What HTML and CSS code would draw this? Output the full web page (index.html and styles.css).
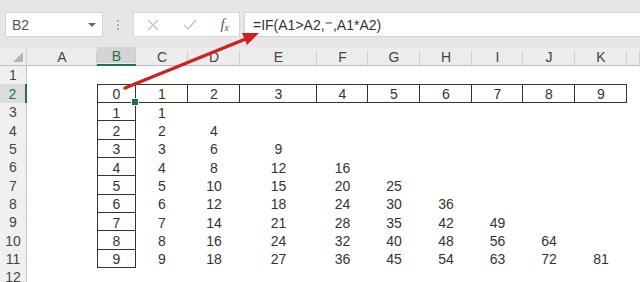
FILE: index.html
```html
<!DOCTYPE html>
<html>
<head>
<meta charset="utf-8">
<link rel="stylesheet" href="styles.css">
</head>
<body>
<div class="app">
  <div class="toolbar">
    <div class="namebox"><span class="nb-text">B2</span><span class="nb-caret"></span></div>
    <div class="grip"><span></span><span></span><span></span></div>
    <div class="fxbtns">
      <svg class="ic" width="14" height="14" viewBox="0 0 14 14"><path d="M2 2L12 12M12 2L2 12" stroke="#c4c4c4" stroke-width="1.4" fill="none"/></svg>
      <svg class="ic" width="16" height="14" viewBox="0 0 16 14"><path d="M2 7L6 11L14 2" stroke="#c4c4c4" stroke-width="1.4" fill="none"/></svg>
      <span class="fx">f<sub>x</sub></span>
    </div>
    <div class="formula">=IF(A1&gt;A2,<span class="q">""</span>,A1*A2)</div>
  </div>
  <div class="sheet">
    <div class="row hdr">
      <div class="corner"><span class="tri"></span></div>
      <div class="ch">A</div><div class="ch sel">B</div><div class="ch">C</div><div class="ch">D</div><div class="ch">E</div><div class="ch">F</div><div class="ch">G</div><div class="ch">H</div><div class="ch">I</div><div class="ch">J</div><div class="ch">K</div><div class="ch"></div>
    </div>
    <div class="row r1">
      <div class="rh">1</div><div></div><div></div><div></div><div></div><div></div><div></div><div></div><div></div><div></div><div></div><div></div><div></div>
    </div>
    <div class="row r2">
      <div class="rh sel">2</div><div></div><div class="c b top first active">0</div><div class="c b top">1</div><div class="c b top">2</div><div class="c b top">3</div><div class="c b top">4</div><div class="c b top">5</div><div class="c b top">6</div><div class="c b top">7</div><div class="c b top">8</div><div class="c b top">9</div><div></div>
    </div>
    <div class="row">
      <div class="rh">3</div><div></div><div class="c b first">1</div><div class="c">1</div><div></div><div></div><div></div><div></div><div></div><div></div><div></div><div></div><div></div>
    </div>
    <div class="row">
      <div class="rh">4</div><div></div><div class="c b first">2</div><div class="c">2</div><div class="c">4</div><div></div><div></div><div></div><div></div><div></div><div></div><div></div><div></div>
    </div>
    <div class="row">
      <div class="rh">5</div><div></div><div class="c b first">3</div><div class="c">3</div><div class="c">6</div><div class="c">9</div><div></div><div></div><div></div><div></div><div></div><div></div><div></div>
    </div>
    <div class="row">
      <div class="rh">6</div><div></div><div class="c b first">4</div><div class="c">4</div><div class="c">8</div><div class="c">12</div><div class="c">16</div><div></div><div></div><div></div><div></div><div></div><div></div>
    </div>
    <div class="row">
      <div class="rh">7</div><div></div><div class="c b first">5</div><div class="c">5</div><div class="c">10</div><div class="c">15</div><div class="c">20</div><div class="c">25</div><div></div><div></div><div></div><div></div><div></div>
    </div>
    <div class="row">
      <div class="rh">8</div><div></div><div class="c b first">6</div><div class="c">6</div><div class="c">12</div><div class="c">18</div><div class="c">24</div><div class="c">30</div><div class="c">36</div><div></div><div></div><div></div><div></div>
    </div>
    <div class="row">
      <div class="rh">9</div><div></div><div class="c b first">7</div><div class="c">7</div><div class="c">14</div><div class="c">21</div><div class="c">28</div><div class="c">35</div><div class="c">42</div><div class="c">49</div><div></div><div></div><div></div>
    </div>
    <div class="row">
      <div class="rh">10</div><div></div><div class="c b first">8</div><div class="c">8</div><div class="c">16</div><div class="c">24</div><div class="c">32</div><div class="c">40</div><div class="c">48</div><div class="c">56</div><div class="c">64</div><div></div><div></div>
    </div>
    <div class="row">
      <div class="rh">11</div><div></div><div class="c b first">9</div><div class="c">9</div><div class="c">18</div><div class="c">27</div><div class="c">36</div><div class="c">45</div><div class="c">54</div><div class="c">63</div><div class="c">72</div><div class="c">81</div><div></div>
    </div>
    <div class="row">
      <div class="rh">12</div><div></div><div></div><div></div><div></div><div></div><div></div><div></div><div></div><div></div><div></div><div></div><div></div>
    </div>
  </div>
  <svg class="arrow" width="640" height="282" viewBox="0 0 640 282">
    <line x1="125" y1="88" x2="248" y2="38" stroke="#d0201e" stroke-width="3.5" stroke-linecap="round"/>
    <polygon points="259,33 242,33 247,45" fill="#d0201e"/>
  </svg>
</div>
</body>
</html>
```
FILE: styles.css
```css
* { box-sizing: border-box; }
html, body { margin: 0; padding: 0; }
body {
  width: 640px;
  height: 282px;
  overflow: hidden;
  background: #fff;
  font-family: "Liberation Sans", Arial, sans-serif;
  color: #333;
}
.app { position: relative; width: 640px; height: 282px; overflow: hidden; }

.toolbar {
  height: 47px;
  background: #e6e6e6;
  display: flex;
  align-items: flex-start;
  padding: 12px 0 0 5px;
}
.namebox {
  width: 98px;
  height: 25px;
  background: #fff;
  border: 1px solid #d4d4d4;
  display: flex;
  align-items: center;
  justify-content: space-between;
  padding: 0 6px 0 6px;
  font-size: 14px;
  color: #555;
}
.nb-caret {
  width: 0; height: 0;
  border-left: 4px solid transparent;
  border-right: 4px solid transparent;
  border-top: 4px solid #666;
}
.grip {
  width: 30px;
  height: 25px;
  display: flex;
  flex-direction: column;
  align-items: center;
  justify-content: center;
  gap: 2px;
}
.grip span { width: 2px; height: 2px; background: #b0b0b0; }
.fxbtns {
  width: 107px;
  height: 25px;
  background: #fff;
  border: 1px solid #d8d8d8;
  display: flex;
  align-items: center;
  justify-content: space-between;
  padding: 0 10px 0 12px;
}
.fx {
  font-family: "Liberation Serif", serif;
  font-style: italic;
  font-size: 15px;
  color: #555;
  line-height: 1;
}
.fx sub { font-size: 10px; vertical-align: -2px; }
.formula {
  flex: 1;
  height: 25px;
  margin-left: 4px;
  background: #fff;
  border: 1px solid #d4d4d4;
  border-right: none;
  display: flex;
  align-items: center;
  padding-left: 8px;
  font-size: 14px;
  color: #333;
}
.formula .q { font-size: 9px; vertical-align: 5px; padding: 0 1px; }

.sheet { display: flex; flex-direction: column; }
.row {
  display: grid;
  grid-template-columns: 27px 70px 39px 52px 52px 77px 51px 52px 52px 51px 52px 52px 13px;
  height: 18.35px;
}
.row.hdr { height: 19px; background: #ececec; }
.row.r1 { height: 18px; }
.row.r2 { height: 19px; }

.corner {
  background: #ececec;
  border-right: 1px solid #cfcfcf;
  border-bottom: 1px solid #bdbdbd;
  position: relative;
}
.tri {
  position: absolute;
  right: 3px; bottom: 3px;
  width: 0; height: 0;
  border-left: 10px solid transparent;
  border-bottom: 10px solid #b4b4b4;
}
.ch {
  background: #ececec;
  border-bottom: 1px solid #bdbdbd;
  box-shadow: inset -1px -4px 0 -3px #ececec;
  position: relative;
  font-size: 14px;
  color: #444;
  display: flex;
  align-items: center;
  justify-content: center;
  padding-top: 1px;
}
.ch::after {
  content: "";
  position: absolute;
  right: 0; top: 4px; bottom: 0;
  width: 1px;
  background: #cfcfcf;
}
.ch.sel {
  background: #d4d4d4;
  color: #217346;
  border-bottom: 2px solid #217346;
}

.rh {
  background: #f0f0f0;
  border-right: 1px solid #c6c6c6;
  font-size: 14px;
  color: #444;
  display: flex;
  align-items: center;
  justify-content: center;
}
.rh.sel {
  background: #dcdcdc;
  color: #217346;
  border-right: 2px solid #217346;
}

.c {
  font-size: 14px;
  color: #333;
  display: flex;
  align-items: center;
  justify-content: center;
  padding-top: 1px;
}
.c.b { box-shadow: inset -1px -1px 0 #333; }
.c.b.first { box-shadow: inset 1px 0 0 #333, inset -1px -1px 0 #333; }
.c.b.top { box-shadow: inset 0 1px 0 #333, inset -1px -1px 0 #333; }
.c.b.top.first { box-shadow: inset 1px 1px 0 #333, inset -1px -1px 0 #333; }
.c.active {
  position: relative;
  box-shadow: inset 0 0 0 2px #217346;
}
.c.active::after {
  content: "";
  position: absolute;
  right: -3px; bottom: -3px;
  width: 6px; height: 6px;
  background: #217346;
  border: 1px solid #fff;
}

.arrow { position: absolute; left: 0; top: 0; pointer-events: none; }
```
